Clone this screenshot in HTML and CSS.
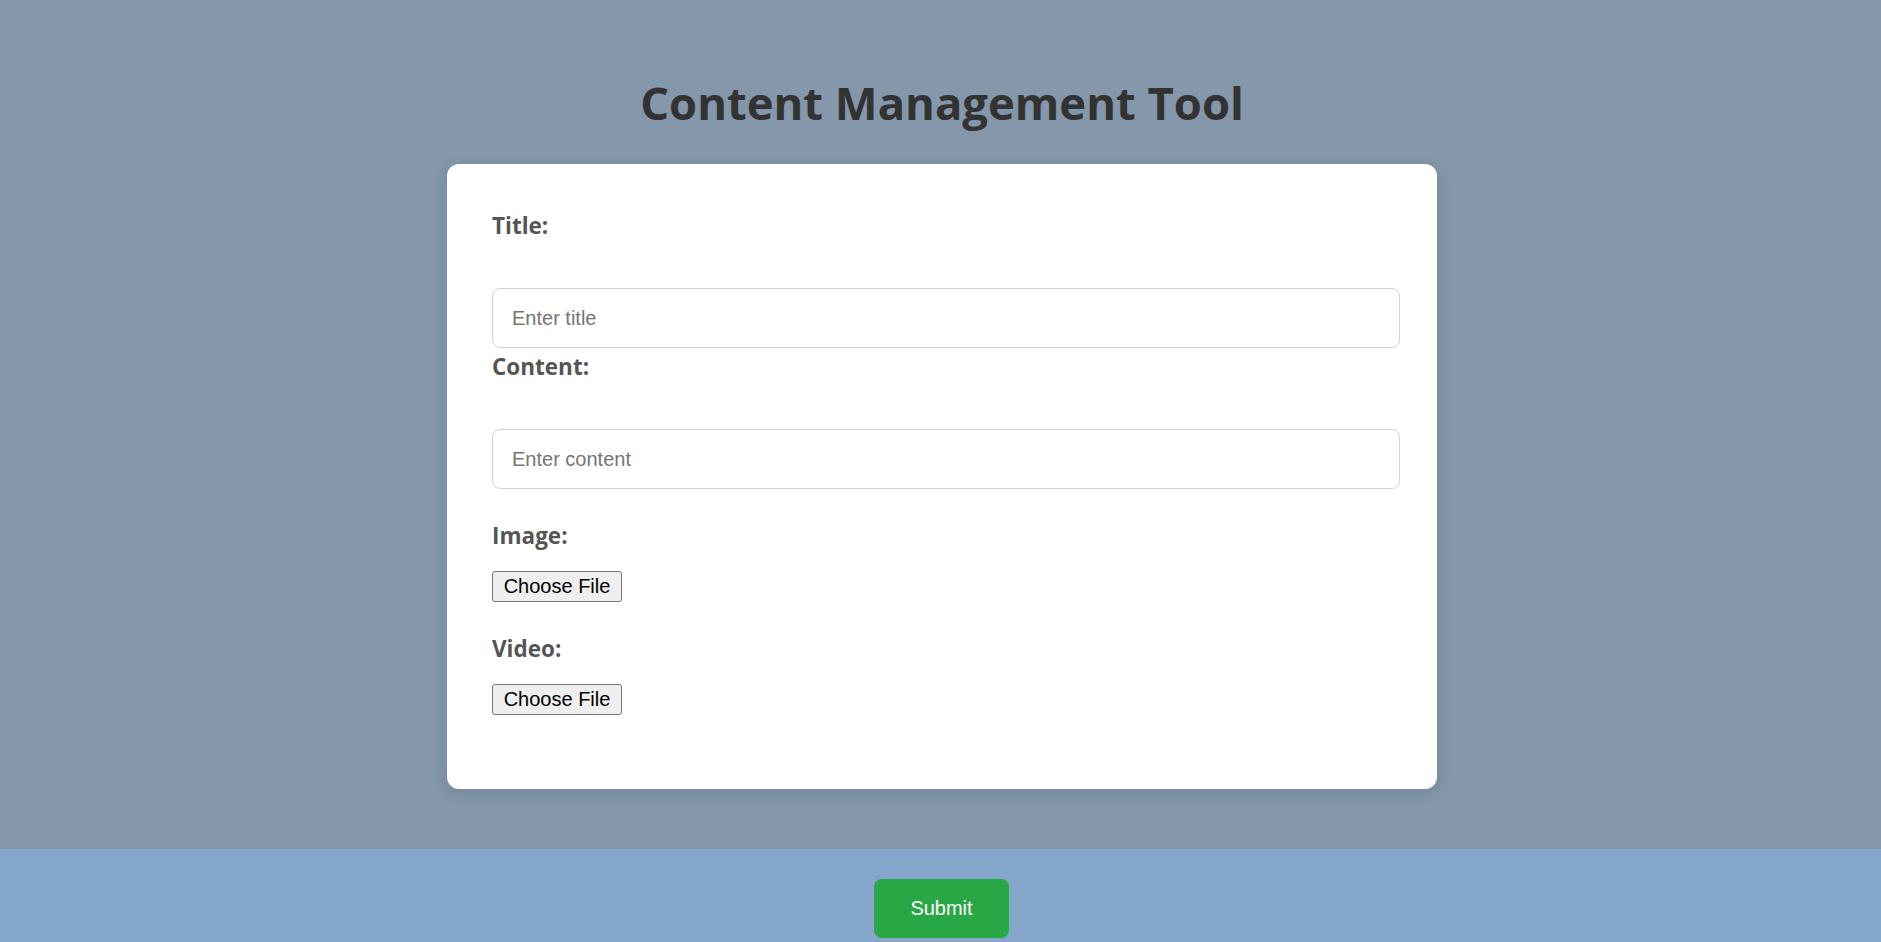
FILE: index.html
```html
<!DOCTYPE html>
<html lang="en">
<head>
<meta charset="utf-8">
<title>Content Management Tool</title>
<link rel="stylesheet" href="styles.css">
</head>
<body>
<main class="page">
  <h1 class="page-title">Content Management Tool</h1>
  <form class="card" onsubmit="return false">
    <div class="field field--text field--tight">
      <label class="field-label" for="title">Title:</label>
      <input class="text-input" id="title" type="text" placeholder="Enter title">
    </div>
    <div class="field field--text">
      <label class="field-label" for="content">Content:</label>
      <input class="text-input" id="content" type="text" placeholder="Enter content">
    </div>
    <div class="field field--file">
      <label class="field-label">Image:</label>
      <button type="button" class="file-btn">Choose File</button>
    </div>
    <div class="field field--file field--last">
      <label class="field-label">Video:</label>
      <button type="button" class="file-btn">Choose File</button>
    </div>
  </form>
</main>
<footer class="footer">
  <button type="button" class="submit-btn">Submit</button>
</footer>
</body>
</html>
```

FILE: styles.css
```css
html, body {
  margin: 0;
  padding: 0;
}
body {
  background: #8497ab;
  font-family: "Open Sans", "Noto Sans", sans-serif;
}
.page {
  display: flex;
  flex-direction: column;
  align-items: center;
  padding: 74px 0 60px 3px;
}
.page-title {
  margin: 0 0 34px 0;
  font-size: 45.4px;
  line-height: 56px;
  font-weight: 700;
  color: #333333;
}
.card {
  box-sizing: border-box;
  width: 990px;
  background: #ffffff;
  border-radius: 12px;
  padding: 47px 37px 45px 45px;
  box-shadow: 0 4px 16px rgba(0, 0, 0, 0.12);
}
.field {
  display: flex;
  flex-direction: column;
  align-items: flex-start;
  margin-bottom: 32px;
}
.field--tight {
  margin-bottom: 4px;
}
.field--last {
  margin-bottom: 29px;
}
.field-label {
  display: block;
  font-size: 22.5px;
  line-height: 30px;
  font-weight: 700;
  color: #555555;
}
.field--text .field-label {
  margin-bottom: 47px;
}
.field--file .field-label {
  margin-bottom: 20px;
}
.text-input {
  box-sizing: border-box;
  width: 100%;
  height: 60px;
  margin: 0;
  padding: 0 19px;
  border: 1px solid #cfd3da;
  border-radius: 8px;
  font-family: "Liberation Sans", Arial, sans-serif;
  font-size: 20px;
  color: #333;
  background: #fff;
  outline: none;
}
.text-input::placeholder {
  color: #757575;
}
.file-btn {
  box-sizing: border-box;
  width: 130px;
  height: 31px;
  margin: 0;
  padding: 0;
  border: 1px solid #767676;
  border-radius: 3px;
  background: #efefef;
  color: #000;
  font-family: "Liberation Sans", Arial, sans-serif;
  font-size: 20px;
  line-height: 29px;
  text-align: center;
}
.footer {
  background: #84a6cb;
  display: flex;
  justify-content: center;
  padding: 30px 0 30px 2px;
}
.submit-btn {
  box-sizing: border-box;
  width: 135px;
  height: 59px;
  border: none;
  border-radius: 8px;
  background: #28a745;
  color: #ffffff;
  font-family: "Liberation Sans", Arial, sans-serif;
  font-size: 20px;
  line-height: 23px;
  padding: 0;
}
```
